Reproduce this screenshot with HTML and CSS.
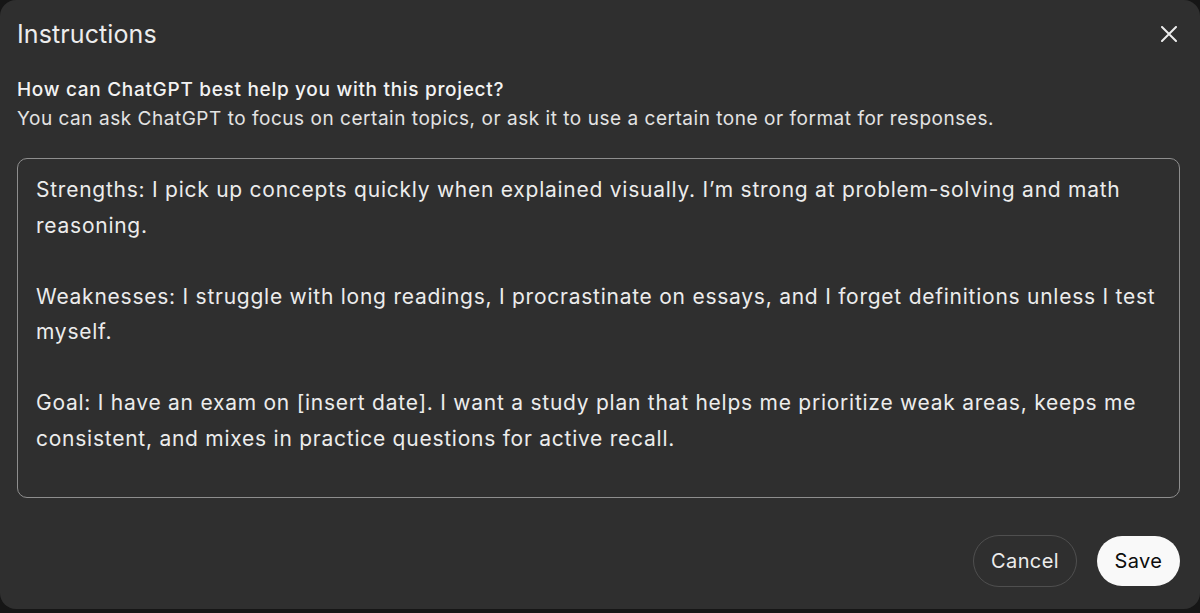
FILE: index.html
```html
<!DOCTYPE html>
<html lang="en">
<head>
<meta charset="utf-8">
<title>Instructions</title>
<link rel="stylesheet" href="styles.css">
</head>
<body>
<div class="dialog">
  <header class="head">
    <h1 class="title">Instructions</h1>
    <button class="close" aria-label="Close">
      <svg width="16" height="16" viewBox="0 0 16 16"><path d="M1 1 L15 15 M15 1 L1 15" stroke="#ececec" stroke-width="2" stroke-linecap="round" fill="none"/></svg>
    </button>
  </header>
  <div class="intro">
    <p class="q">How can ChatGPT best help you with this project?</p>
    <p class="hint">You can ask ChatGPT to focus on certain topics, or ask it to use a certain tone or format for responses.</p>
  </div>
  <div class="box">
    <p>Strengths: I pick up concepts quickly when explained visually. I’m strong at problem-solving and math reasoning.</p>
    <p>Weaknesses: I struggle with long readings, I procrastinate on essays, and I forget definitions unless I test myself.</p>
    <p>Goal: I have an exam on [insert date]. I want a study plan that helps me prioritize weak areas, keeps me consistent, and mixes in practice questions for active recall.</p>
  </div>
  <footer class="actions">
    <button class="btn cancel">Cancel</button>
    <button class="btn save">Save</button>
  </footer>
</div>
</body>
</html>
```

FILE: styles.css
```css
html, body {
  margin: 0;
  padding: 0;
  background: #161616;
}
body {
  font-family: Inter, "Noto Sans", sans-serif;
  color: #ececec;
}
.dialog {
  width: 1200px;
  height: 609px;
  box-sizing: border-box;
  background: #2f2f2f;
  border-radius: 16px;
  padding: 0 20px 0 17px;
  display: flex;
  flex-direction: column;
}
.head {
  display: flex;
  justify-content: space-between;
  align-items: center;
  height: 67px;
}
.title {
  margin: 0;
  font-size: 25px;
  font-weight: 400;
  letter-spacing: 0.1px;
  color: #ececec;
}
.close {
  background: none;
  border: 0;
  padding: 0;
  width: 16px;
  height: 16px;
  margin-right: 3px;
  display: flex;
}
.intro {
  margin-top: 8px;
  display: flex;
  flex-direction: column;
}
.intro p {
  margin: 0;
  font-size: 19px;
  line-height: 29px;
}
.q {
  font-weight: 500;
  letter-spacing: 0.7px;
  color: #f3f3f3;
}
.hint {
  letter-spacing: 0.53px;
  color: #e3e3e3;
}
.box {
  margin-top: 25px;
  height: 340px;
  box-sizing: border-box;
  border: 1.5px solid #8e8e8e;
  border-radius: 10px;
  padding: 13px 18px;
}
.box p {
  margin: 0 0 35.5px;
  font-size: 21px;
  line-height: 35.5px;
  letter-spacing: 0.75px;
  color: #ececec;
}
.actions {
  margin-top: 37px;
  display: flex;
  justify-content: flex-end;
  align-items: center;
  gap: 20px;
}
.btn {
  font-family: inherit;
  font-size: 20px;
  letter-spacing: 0.4px;
  border-radius: 999px;
  cursor: pointer;
}
.cancel {
  height: 52px;
  width: 104px;
  background: transparent;
  border: 1px solid #4f4f4f;
  color: #ececec;
}
.save {
  height: 50px;
  width: 83px;
  background: #f9f9f9;
  border: 0;
  color: #0d0d0d;
}
```
